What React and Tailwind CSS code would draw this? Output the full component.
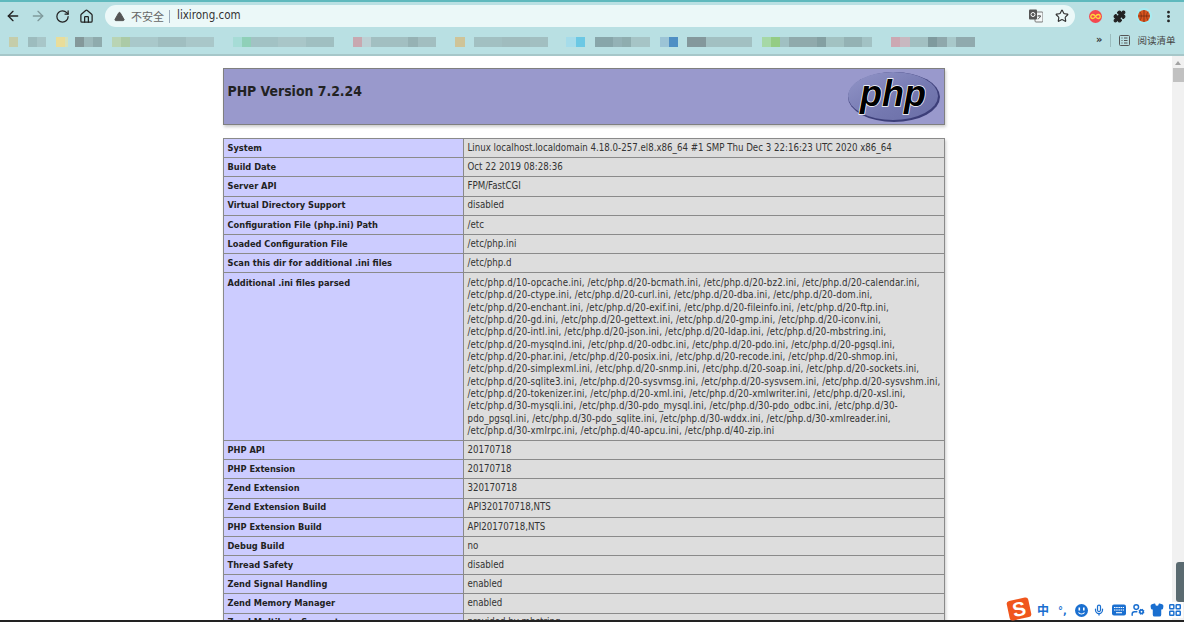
import { ArrowLeft, ArrowRight, RotateCw, Home, Star, Puzzle, MoreVertical, TriangleAlert, Mic, UserCog, Shirt, LayoutGrid } from "lucide-react";

const rows1 = [
  ["System", "Linux localhost.localdomain 4.18.0-257.el8.x86_64 #1 SMP Thu Dec 3 22:16:23 UTC 2020 x86_64"],
  ["Build Date", "Oct 22 2019 08:28:36"],
  ["Server API", "FPM/FastCGI"],
  ["Virtual Directory Support", "disabled"],
  ["Configuration File (php.ini) Path", "/etc"],
  ["Loaded Configuration File", "/etc/php.ini"],
  ["Scan this dir for additional .ini files", "/etc/php.d"],
];

const iniLines = [
  "/etc/php.d/10-opcache.ini, /etc/php.d/20-bcmath.ini, /etc/php.d/20-bz2.ini, /etc/php.d/20-calendar.ini,",
  "/etc/php.d/20-ctype.ini, /etc/php.d/20-curl.ini, /etc/php.d/20-dba.ini, /etc/php.d/20-dom.ini,",
  "/etc/php.d/20-enchant.ini, /etc/php.d/20-exif.ini, /etc/php.d/20-fileinfo.ini, /etc/php.d/20-ftp.ini,",
  "/etc/php.d/20-gd.ini, /etc/php.d/20-gettext.ini, /etc/php.d/20-gmp.ini, /etc/php.d/20-iconv.ini,",
  "/etc/php.d/20-intl.ini, /etc/php.d/20-json.ini, /etc/php.d/20-ldap.ini, /etc/php.d/20-mbstring.ini,",
  "/etc/php.d/20-mysqlnd.ini, /etc/php.d/20-odbc.ini, /etc/php.d/20-pdo.ini, /etc/php.d/20-pgsql.ini,",
  "/etc/php.d/20-phar.ini, /etc/php.d/20-posix.ini, /etc/php.d/20-recode.ini, /etc/php.d/20-shmop.ini,",
  "/etc/php.d/20-simplexml.ini, /etc/php.d/20-snmp.ini, /etc/php.d/20-soap.ini, /etc/php.d/20-sockets.ini,",
  "/etc/php.d/20-sqlite3.ini, /etc/php.d/20-sysvmsg.ini, /etc/php.d/20-sysvsem.ini, /etc/php.d/20-sysvshm.ini,",
  "/etc/php.d/20-tokenizer.ini, /etc/php.d/20-xml.ini, /etc/php.d/20-xmlwriter.ini, /etc/php.d/20-xsl.ini,",
  "/etc/php.d/30-mysqli.ini, /etc/php.d/30-pdo_mysql.ini, /etc/php.d/30-pdo_odbc.ini, /etc/php.d/30-",
  "pdo_pgsql.ini, /etc/php.d/30-pdo_sqlite.ini, /etc/php.d/30-wddx.ini, /etc/php.d/30-xmlreader.ini,",
  "/etc/php.d/30-xmlrpc.ini, /etc/php.d/40-apcu.ini, /etc/php.d/40-zip.ini",
];

const rows2 = [
  ["PHP API", "20170718"],
  ["PHP Extension", "20170718"],
  ["Zend Extension", "320170718"],
  ["Zend Extension Build", "API320170718,NTS"],
  ["PHP Extension Build", "API20170718,NTS"],
  ["Debug Build", "no"],
  ["Thread Safety", "disabled"],
  ["Zend Signal Handling", "enabled"],
  ["Zend Memory Manager", "enabled"],
  ["Zend Multibyte Support", "provided by mbstring"],
];

const bar = "#b9e0e3";
// mosaic-blurred bookmarks, left to right: [width, colour]
const marks = [
  [9, "#c5cdaa"], [10, bar], [9, "#9dbcbe"], [9, "#a8c6c8"], [10, bar], [9, "#e9dd9a"], [3, "#d6e2bc"], [7, bar],
  [9, "#84989a"], [9, "#9db9bb"], [9, "#8fabad"], [10, bar], [9, "#b9d4b4"], [9, "#abcaa6"], [28, "#a9c8ca"], [28, "#a0bec0"],
  [28, "#a9c7c9"], [19, bar], [9, "#a6dcd6"], [9, "#8fd0b8"], [27, "#a2c2c4"], [28, "#a9c6c8"], [28, "#a0bfc1"], [19, bar],
  [9, "#c8a8b0"], [9, "#bcd0d4"], [37, "#a2bfc1"], [10, "#96b2b4"], [18, "#a2bec0"], [19, bar], [10, "#cfc498"], [9, bar],
  [28, "#a2c0c2"], [28, "#a0bcbe"], [18, "#a2bfc1"], [18, bar], [10, "#a6dcea"], [9, "#6cc8e4"], [10, bar], [18, "#88a6aa"],
  [9, "#94b2b6"], [9, "#8fadaf"], [19, "#a6c4c6"], [10, bar], [9, "#9cc4d6"], [9, "#4f8fc4"], [9, bar], [19, "#84989c"],
  [46, "#a2c0c2"], [10, bar], [9, "#a6d8a6"], [9, "#94cc84"], [9, "#a0c0c2"], [28, "#90aaac"], [9, "#84a0a2"], [18, "#a2c2c2"],
  [18, "#94b2b4"], [10, "#a2c2c4"], [19, bar], [9, "#cca8b2"], [10, "#c8b8c0"], [18, "#a2c0c2"], [9, "#7f9a9e"], [10, "#8fa8ac"],
  [9, "#a8c8ca"], [19, "#90aaae"],
];

function Row({ label, children, first }) {
  const pad = first ? "px-[3.5px] pt-[3.93px] pb-[2.6px]" : "px-[3.5px] py-[2.93px]";
  return (
    <tr>
      <td className={`border border-[#8a8a8a] bg-[#ccccff] ${pad} align-top text-[9.2px] font-bold text-[#222]`}>{label}</td>
      <td className={`border border-[#8a8a8a] bg-[#dddddd] ${pad} align-top text-[#333]`}>{children}</td>
    </tr>
  );
}

function PhpLogo() {
  return (
    <svg width="94" height="52" viewBox="0 0 94 52">
      <defs>
        <linearGradient id="phpFill" x1="0" y1="0" x2="1" y2="1">
          <stop offset="0" stopColor="#9295c8" />
          <stop offset="0.6" stopColor="#7478b0" />
          <stop offset="1" stopColor="#6a6ea6" />
        </linearGradient>
      </defs>
      <ellipse cx="47" cy="26" rx="46" ry="25" fill="#3c3e78" />
      <ellipse cx="46" cy="25" rx="45" ry="24" fill="url(#phpFill)" />
      <text x="46" y="35" textAnchor="middle" textLength="66" lengthAdjust="spacingAndGlyphs" fontFamily="'Liberation Sans', sans-serif" fontSize="37" fontStyle="italic" fontWeight="700" fill="#000" stroke="#fff" strokeWidth="1.4" paintOrder="stroke">php</text>
    </svg>
  );
}

function TranslateIcon() {
  return (
    <svg width="14" height="14" viewBox="0 0 14 14">
      <rect x="6" y="3" width="8" height="10" rx="1" fill="#f4f8f8" stroke="#777" />
      <rect x="0" y="0.5" width="8" height="10" rx="1" fill="#555" />
      <circle cx="4" cy="5.5" r="2" fill="none" stroke="#fff" />
      <path d="M8.5 7h3.5M10 6v1M11.5 7c-.5 1.5-1.500 2.500-2.800 3" stroke="#555" fill="none" />
    </svg>
  );
}

function InfinityBadge() {
  return (
    <svg width="13" height="13" viewBox="0 0 13 13">
      <circle cx="6.500" cy="6.500" r="6.500" fill="#f4484f" />
      <path d="M6.500 6.500c-1-1.500-1.800-2-2.700-2a2 2 0 0 0 0 4c.9 0 1.700-.5 2.700-2s1.800-2 2.700-2a2 2 0 0 1 0 4c-.9 0-1.700-.5-2.700-2z" fill="none" stroke="#ffd83a" strokeWidth="1.300" />
    </svg>
  );
}

function Basketball() {
  return (
    <svg width="16" height="16" viewBox="0 0 16 16">
      <circle cx="8" cy="8" r="8" fill="#a8ecf2" />
      <circle cx="8" cy="8" r="6" fill="#d9541e" />
      <path d="M8 2v12M2 8h12M3.800 3.800c2 1.500 2 6.900 0 8.400M12.200 3.800c-2 1.500-2 6.900 0 8.400" fill="none" stroke="#6b2a10" strokeWidth="0.700" />
    </svg>
  );
}

function ReadingIcon() {
  return (
    <svg width="11" height="11" viewBox="0 0 11 11" fill="none" stroke="#555">
      <rect x="0.500" y="0.500" width="10" height="10" rx="1" />
      <path d="M2.500 3h1M5 3h3.500M2.500 5.500h1M5 5.500h3.500M2.500 8h1M5 8h3.500" />
    </svg>
  );
}

function ImeFace() {
  return (
    <svg width="13" height="13" viewBox="0 0 13 13" className="mr-[5px]">
      <circle cx="6.500" cy="6.500" r="6.500" fill="#1a6fd0" />
      <rect x="3.500" y="3.500" width="1.600" height="3" fill="#fff" />
      <rect x="8" y="3.500" width="1.600" height="3" fill="#fff" />
      <path d="M3.500 8.500c1.500 2 4.500 2 6 0" fill="none" stroke="#fff" strokeWidth="1.200" />
    </svg>
  );
}

function ImeKeyboard() {
  return (
    <svg width="14" height="12" viewBox="0 0 14 12" className="mr-[5px]">
      <rect x="0" y="0.500" width="14" height="11" rx="2" fill="#1a6fd0" />
      <path d="M2 3.500h10M2 6h10" stroke="#fff" strokeWidth="1.100" strokeDasharray="1.500 0.700" />
      <path d="M4 8.700h6" stroke="#fff" strokeWidth="1.100" />
    </svg>
  );
}

export default function App() {
  return (
    <div className="relative flex h-[622px] w-[1184px] flex-col overflow-hidden bg-white font-['DejaVu_Sans',sans-serif] [font-stretch:condensed]">
      {/* browser chrome */}
      <div className="h-[56px] shrink-0 border-t-[2px] border-b-[2px] border-t-[#5fb9bd] border-b-[#a6c7c9] bg-[#b9e0e3]">
        <div className="flex h-[27px] items-center pt-[1px]">
          <div className="flex items-center gap-[9px] pl-[5px] text-[#222]">
            <ArrowLeft size={16} strokeWidth={2} />
            <ArrowRight size={16} strokeWidth={2} className="text-[#7f9a9c]" />
            <RotateCw size={15} strokeWidth={2} />
            <Home size={15} strokeWidth={2} />
          </div>
          <div className="ml-[11px] flex h-[22px] w-[970px] items-center rounded-full bg-[#ebf8f8] pl-[9px] pr-[6px]">
            <TriangleAlert size={11} fill="#555" stroke="#555" />
            <span className="ml-[6px] font-['Noto_Sans_CJK_SC',sans-serif] text-[11px] text-[#666]">不安全</span>
            <span className="mx-[5px] h-[13px] w-px bg-[#9ab]" />
            <span className="ml-[2px] text-[11.500px] text-[#333]">lixirong.com</span>
            <div className="ml-auto flex items-center gap-[12px]">
              <TranslateIcon />
              <Star size={14} strokeWidth={2} className="text-[#333]" />
            </div>
          </div>
          <div className="ml-[8px] flex items-center">
            <div className="flex w-[24.500px] justify-center"><InfinityBadge /></div>
            <div className="flex w-[24.500px] justify-center"><Puzzle size={13} fill="#222" stroke="#222" /></div>
            <div className="flex w-[24.500px] justify-center"><Basketball /></div>
            <div className="flex w-[24.500px] justify-center"><MoreVertical size={15} strokeWidth={2.500} className="text-[#222]" /></div>
          </div>
        </div>
        <div className="flex h-[23px] items-center">
          <div className="mt-[3px] flex h-[10px] w-[1096px] items-center pl-[9px] blur-[0.5px]">
            {marks.map((m, i) => (
              <div key={i} className="h-full shrink-0" style={{ width: m[0], backgroundColor: m[1] }} />
            ))}
          </div>
          <span className="text-[11px] font-bold text-[#333]">»</span>
          <span className="ml-[8px] h-[13px] w-px bg-[#9bbcbe]" />
          <span className="ml-[8px] flex"><ReadingIcon /></span>
          <span className="ml-[7px] font-['Noto_Sans_CJK_SC',sans-serif] text-[9.500px] text-[#444]">阅读清单</span>
        </div>
      </div>

      {/* page */}
      <div className="flex min-h-0 flex-1">
        <div className="min-w-0 flex-1 overflow-hidden pt-[12px] pl-[223px]">
          <div className="w-[722px] text-[9.650px] leading-[12.330px]">
            <div className="flex h-[57px] justify-between border border-[#7f7f7f] bg-[#9999cc] pl-[3.500px] pr-[3px] pt-[2px] shadow-[1px_2px_3px_#ccc]">
              <h1 className="mt-[11px] text-[13.900px] font-bold leading-[18px] text-[#222]">PHP Version 7.2.24</h1>
              <PhpLogo />
            </div>
            <table className="mt-[13px] w-[722px] table-fixed border-collapse shadow-[1px_2px_3px_#ccc]">
              <colgroup>
                <col className="w-[240px]" />
                <col />
              </colgroup>
              <tbody>
                {rows1.map(([k, v]) => (
                  <Row key={k} label={k}>{v}</Row>
                ))}
                <Row first label="Additional .ini files parsed">
                  {iniLines.map((l) => (
                    <div key={l} className="whitespace-nowrap tracking-[0.14px]">{l}</div>
                  ))}
                </Row>
                {rows2.map(([k, v]) => (
                  <Row key={k} label={k}>{v}</Row>
                ))}
              </tbody>
            </table>
          </div>
        </div>
        {/* scrollbar */}
        <div className="flex w-[12px] shrink-0 flex-col items-center bg-[#f1f1f1]">
          <div className="mt-[5px] h-0 w-0 border-x-[3px] border-b-[4px] border-x-transparent border-b-[#a3a3a3]" />
          <div className="mt-[3px] h-[14px] w-[11px] bg-[#c1c1c1]" />
        </div>
      </div>
      <div className="h-[2.500px] shrink-0 bg-[#222]" />

      {/* IME bar floating over the page */}
      <div className="absolute right-[1px] bottom-[4px] flex h-[16px] w-[153px] items-center bg-white/85 pl-[7px] text-[#1a6fd0]">
        <span className="w-[21px] font-['Noto_Sans_CJK_SC',sans-serif] text-[12px] font-bold leading-none">中</span>
        <span className="w-[17px] text-[11px] font-bold leading-none">°,</span>
        <ImeFace />
        <Mic size={12} strokeWidth={2.500} className="mr-[7px]" />
        <ImeKeyboard />
        <UserCog size={14} strokeWidth={2.500} className="mr-[5px]" />
        <Shirt size={14} strokeWidth={2.500} fill="#1a6fd0" className="mr-[4px]" />
        <LayoutGrid size={14} strokeWidth={2.500} />
      </div>
      <div className="absolute right-[154px] bottom-[3px] flex h-[20px] w-[22px] rotate-[-12deg] items-center justify-center rounded-[3px] bg-[#f0561d] font-['Liberation_Sans',sans-serif] text-[20px] font-bold leading-none text-white">S</div>
      <div className="absolute right-0 bottom-[20px] h-[40px] w-[8px] rounded-l-[3px] bg-[#5a6a70]" />
    </div>
  );
}
